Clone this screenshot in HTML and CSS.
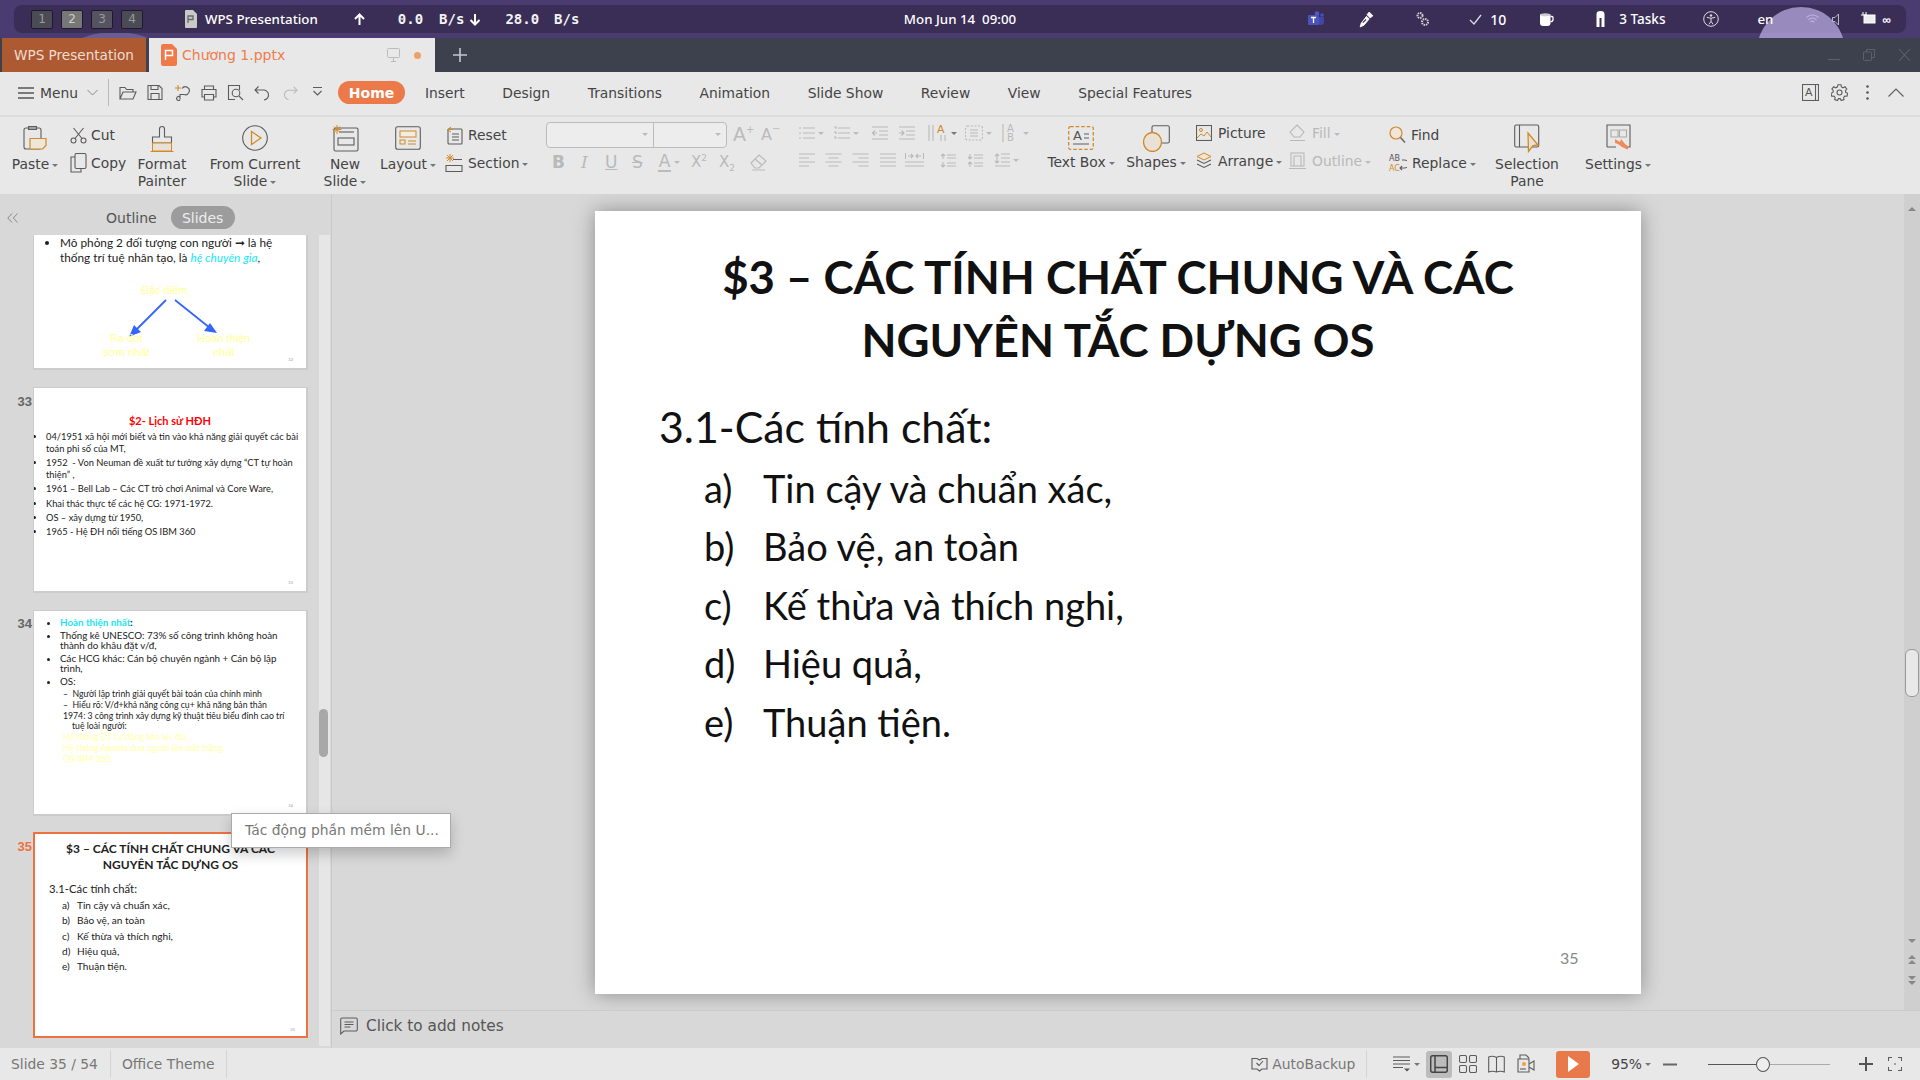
FILE: index.html
```html
<!DOCTYPE html>
<html lang="vi">
<head>
<meta charset="utf-8">
<title>WPS Presentation</title>
<link rel="stylesheet" href="styles.css">
</head>
<body>
<div class="desktop">
  <div class="blob-left"></div>
  <div class="topbar">
    <div class="tb-left">
      <div class="ws"><span class="wsn">1</span><span class="wsn on">2</span><span class="wsn mid">3</span><span class="wsn">4</span></div>
      <svg class="tb-app" width="12" height="18" viewBox="0 0 12 18"><path d="M1 0h7l4 4v13a1 1 0 0 1-1 1H1a1 1 0 0 1-1-1V1a1 1 0 0 1 1-1z" fill="#c9c9c9"/><path d="M3 13V6h5v3.500H3" fill="none" stroke="#666" stroke-width="1.300"/></svg>
      <span class="tb-title">WPS Presentation</span>
      <svg class="tb-up" width="11" height="13" viewBox="0 0 11 13"><path d="M5.500 12V1.500M1 6l4.500-4.500L10 6" fill="none" stroke="#fff" stroke-width="2"/></svg>
      <span class="mono m1">0.0</span><span class="mono m2">B/s</span>
      <svg class="tb-down" width="12" height="13" viewBox="0 0 11 13"><path d="M5.500 1v10.500M1 7l4.500 4.500L10 7" fill="none" stroke="#fff" stroke-width="2"/></svg>
      <span class="mono m3">28.0</span><span class="mono m4">B/s</span>
    </div>
    <div class="tb-clock">Mon Jun 14&nbsp; 09:00</div>
    <div class="tb-right">
      <svg class="r-teams" width="17" height="16" viewBox="0 0 17 16"><circle cx="9" cy="2.500" r="2.300" fill="#5059c9"/><circle cx="14" cy="4" r="1.800" fill="#4750b8"/><path d="M10 6h6v5a3 3 0 0 1-6 0z" fill="#3f48a8"/><rect x="0" y="4" width="11" height="10" rx="1" fill="#4b53bc"/><path d="M3 6.500h5M5.500 6.500V12" stroke="#fff" stroke-width="1.300"/></svg>
      <svg class="r-pip" width="15" height="17" viewBox="0 0 14 16"><path d="M9.500 1l3.500 3.500-2.500 2-3-3zM7 5l2.500 2.500-5 6L1 15l1-3.500z" fill="#fff" stroke="#fff" stroke-width=".8"/><path d="M3.500 11l3-3" stroke="#3a2e55"/></svg>
      <svg class="r-gears" width="13" height="16" viewBox="0 0 13 16"><circle cx="4" cy="4.500" r="2.500" fill="none" stroke="#cfcfcf" stroke-width="2" stroke-dasharray="1.500 .8"/><circle cx="9" cy="11" r="3" fill="none" stroke="#cfcfcf" stroke-width="2" stroke-dasharray="1.500 .8"/></svg>
      <svg class="r-check" width="13" height="11" viewBox="0 0 13 11"><path d="M1 6l4 4 7-9" fill="none" stroke="#ddd" stroke-width="1.300"/></svg>
      <span class="tb-text r-ten">10</span>
      <svg class="r-cup" width="15" height="15" viewBox="0 0 15 15"><path d="M1 2.500h10.500V11a3 3 0 0 1-3 3h-4.500a3 3 0 0 1-3-3z" fill="#fff"/><path d="M11.500 4.500h1.500a1 1 0 0 1 1 1v2a2 2 0 0 1-2.500 2" fill="none" stroke="#fff" stroke-width="1.300"/><ellipse cx="6.250" cy="2.800" rx="5" ry="1.500" fill="#ccc"/></svg>
      <svg class="r-helm" width="11" height="17" viewBox="0 0 11 17"><path d="M1.500 3a4 3 0 0 1 8 0v13h-3V7h-2v9h-3z" fill="#fff"/></svg>
      <span class="tb-text r-tasks">3 Tasks</span>
      <svg class="r-a11y" width="16" height="16" viewBox="0 0 16 16"><circle cx="8" cy="8" r="7.300" fill="none" stroke="#ddd"/><circle cx="8" cy="4.500" r="1.200" fill="#ddd"/><path d="M3.800 6.300l4.200 1 4.200-1M8 7.300v3l-2 3M8 10.300l2 3" fill="none" stroke="#ddd"/></svg>
      <span class="tb-text r-en">en</span>
      <svg class="r-wifi" width="13" height="11" viewBox="0 0 13 11"><path d="M.5 3.500a8.500 8.500 0 0 1 12 0M2.500 5.800a5.500 5.500 0 0 1 8 0M4.500 8a2.800 2.800 0 0 1 4 0" fill="none" stroke="#ddd" stroke-width="1.100"/></svg>
      <svg class="r-vol" width="7" height="13" viewBox="0 0 7 13"><path d="M.5 4.500H3L6.500 1v11L3 8.500H.5z" fill="none" stroke="#ddd"/></svg>
      <svg class="r-plug" width="15" height="14" viewBox="0 0 15 14"><rect x="3" y="3" width="11" height="8" fill="#eee" stroke="#fff"/><path d="M2 0v3M5 0v3M0 3h6" stroke="#fff"/></svg>
      <span class="tb-text r-inf">∞</span>
    </div>
  </div>
  <div class="blob-right"></div>
</div>

<div class="tabs">
  <div class="tab-app">WPS Presentation</div>
  <div class="tab-doc">
    <svg width="16" height="22" viewBox="0 0 16 22"><path d="M2 0h9l5 5v15a2 2 0 0 1-2 2H2a2 2 0 0 1-2-2V2a2 2 0 0 1 2-2z" fill="#f0794a"/><path d="M4.500 16V6.500h7v5h-7" fill="none" stroke="#fff" stroke-width="1.500"/></svg>
    <span class="doc-name">Chương 1.pptx</span>
    <svg class="doc-mon" width="13" height="14" viewBox="0 0 13 14"><rect x=".5" y=".5" width="12" height="9" rx="1" fill="none" stroke="#bbb"/><path d="M6.500 10v3M4 13.500h5" stroke="#bbb"/></svg>
    <span class="doc-dot"></span>
  </div>
  <svg class="tab-plus" width="14" height="14" viewBox="0 0 14 14"><path d="M7 0v14M0 7h14" stroke="#c4c6cc" stroke-width="1.600"/></svg>
  <div class="win">
    <svg width="12" height="12" viewBox="0 0 12 12"><path d="M0 10.500h12" stroke="#5c606b" stroke-width="1.200"/></svg>
    <svg width="12" height="12" viewBox="0 0 12 12"><rect x=".5" y="3" width="8" height="8.500" rx="1" fill="none" stroke="#5c606b"/><path d="M3.500 3V.5h8v8H9" fill="none" stroke="#5c606b"/></svg>
    <svg width="13" height="12" viewBox="0 0 13 12"><path d="M1 0l11 12M12 0L1 12" stroke="#5c606b" stroke-width="1.100"/></svg>
  </div>
</div>

<div class="menubar">
  <svg class="m-burger" width="16" height="12" viewBox="0 0 16 12"><path d="M0 1h16M0 6h16M0 11h16" stroke="#555" stroke-width="1.300"/></svg>
  <span class="m-menu">Menu</span>
  <svg class="m-chev" width="11" height="7" viewBox="0 0 11 7"><path d="M.5 1l5 5 5-5" fill="none" stroke="#888"/></svg>
  <span class="m-sep"></span>
  <div class="qa">
    <svg width="18" height="16" viewBox="0 0 18 16"><path d="M1 14V2.500h5l1.500 2H14v2.500M1 14l3-7h13l-3 7z" class="ic"/></svg>
    <svg width="16" height="17" viewBox="0 0 16 17"><path d="M1 1.500h11l3 3v11H1zM4 1.500v4h7v-4M4 15.500v-6h8v6" class="ic"/></svg>
    <svg width="18" height="17" viewBox="0 0 18 17"><path d="M9 4.500a4 4 0 1 1 2 6H7v5M7 16a2 2 0 1 1 0-3" class="ic"/><path d="M2 4h6M5 1v6" class="ic oc"/></svg>
    <svg width="16" height="16" viewBox="0 0 16 16"><path d="M3.500 4.500V1h9v3.500M3.500 12H1V4.500h14V12h-2.500M3.500 9.500h9V15h-9z" class="ic"/></svg>
    <svg width="17" height="17" viewBox="0 0 17 17"><path d="M8 15.500H1.500v-14h11V6" class="ic"/><circle cx="9" cy="9" r="3.800" class="ic"/><path d="M12 12l4 4" class="ic"/></svg>
    <svg width="15" height="16" viewBox="0 0 15 16"><path d="M4.500 1.500L1 5l3.500 3.500M1 5h8a5 5 0 0 1 1 10" class="ic"/></svg>
    <svg class="q-redo" width="14" height="16" viewBox="0 0 15 16"><path d="M10.500 1.500L14 5l-3.500 3.500M14 5H6a5 5 0 0 0-1 10" class="ic dis"/></svg>
    <svg class="q-dd" width="9" height="11" viewBox="0 0 9 11"><path d="M0 .5h9M.5 4l4 4 4-4" class="ic"/></svg>
  </div>
  <span class="m-home">Home</span>
  <nav class="m-tabs"><span>Insert</span><span>Design</span><span>Transitions</span><span>Animation</span><span>Slide Show</span><span>Review</span><span>View</span><span>Special Features</span></nav>
  <div class="m-right">
    <svg width="17" height="17" viewBox="0 0 17 17"><rect x=".5" y=".5" width="16" height="16" class="ic"/><path d="M13.500 .5v16" class="ic"/><text x="3" y="12" class="ic-t">A</text></svg>
    <svg width="17" height="17" viewBox="0 0 17 17"><circle cx="8.500" cy="8.500" r="2.500" class="ic"/><path d="M7 .8h3l.4 2.200 1.600.8 2-1 1.800 2.200-1.400 1.700.3 1.700 2 .9-.7 2.900-2.200-.1-1.200 1.300.4 2.200-2.800 1-1-2H7.500l-1 2-2.800-1 .4-2.200-1.200-1.300-2.200.1-.7-2.900 2-.9.300-1.700L.9 5l1.800-2.200 2 1 1.600-.8z" class="ic"/></svg>
    <svg class="m-dots" width="3" height="15" viewBox="0 0 3 15"><circle cx="1.500" cy="1.500" r="1.300" fill="#555"/><circle cx="1.500" cy="7.500" r="1.300" fill="#555"/><circle cx="1.500" cy="13.500" r="1.300" fill="#555"/></svg>
    <svg width="16" height="9" viewBox="0 0 16 9"><path d="M.5 8.500L8 1l7.500 7.500" class="ic"/></svg>
  </div>
</div>

<div class="ribbon">
  <div class="big g-paste">
    <div class="big-ic"><svg width="24" height="26" viewBox="0 0 24 26"><rect x="1" y="3" width="17" height="21" rx="2" class="ic"/><path d="M5.500 4.500V1.500h8v3z" class="ic"/><path d="M7 13.500h16v7l-3.500 3.500H7z" class="pap"/></svg></div>
    <div class="lbl">Paste<i class="car"></i></div>
  </div>
  <div class="col g-clip">
    <div class="row"><svg width="17" height="17" viewBox="0 0 17 17"><circle cx="3.500" cy="13.500" r="2.500" class="ic"/><circle cx="13.500" cy="13.500" r="2.500" class="ic"/><path d="M5 11.500L13.500 1M12 11.500L3.500 1" class="ic"/></svg><span>Cut</span></div>
    <div class="row"><svg width="17" height="20" viewBox="0 0 17 20"><rect x="5" y=".5" width="11" height="15" rx="1.500" class="ic"/><path d="M5 4H1v15h10v-3.500" class="ic"/></svg><span>Copy</span></div>
  </div>
  <div class="big g-painter">
    <div class="big-ic"><svg width="24" height="27" viewBox="0 0 24 27"><path d="M9.500 12V4a2.500 2.500 0 0 1 5 0v8h7v6h-19v-6z" class="ic"/><rect x="2.500" y="18" width="19" height="8" fill="#e9e1d6" stroke="#d08a2a"/><path d="M.5 26.500h23" stroke="#d08a2a"/></svg></div>
    <div class="lbl">Format<br>Painter</div>
  </div>
  <div class="big g-from">
    <div class="big-ic"><svg width="26" height="26" viewBox="0 0 26 26"><circle cx="13" cy="13" r="12.300" class="ic"/><path d="M9.500 6.500L19 13l-9.500 6.500z" fill="none" stroke="#d08a2a" stroke-width="1.300"/></svg></div>
    <div class="lbl">From Current<br>Slide<i class="car"></i></div>
  </div>
  <div class="big g-new">
    <div class="big-ic"><svg width="27" height="27" viewBox="0 0 27 27"><rect x="2" y="3" width="24" height="23" rx="1.500" class="ic"/><rect x="6" y="13" width="16" height="7" class="ic"/><path d="M7 7h15" class="ic"/><path d="M5 0v9M.5 4.500h9M2 1.500l6 6M8 1.500l-6 6" stroke="#d08a2a"/></svg></div>
    <div class="lbl">New<br>Slide<i class="car"></i></div>
  </div>
  <div class="big g-layout">
    <div class="big-ic"><svg width="26" height="24" viewBox="0 0 26 24"><rect x=".7" y=".7" width="24.600" height="22.600" rx="2" class="ic"/><rect x="5" y="5" width="16" height="6" fill="#f2ece2" stroke="#d08a2a"/><rect x="5" y="14" width="5" height="4" fill="none" stroke="#d08a2a"/><path d="M13 15h8M13 18h8" stroke="#d08a2a"/></svg></div>
    <div class="lbl">Layout<i class="car"></i></div>
  </div>
  <div class="col g-reset">
    <div class="row"><svg width="18" height="19" viewBox="0 0 18 19"><rect x="3" y="3" width="14" height="15" rx="1" class="ic"/><path d="M7 8h7M7 11h7M7 14h7" class="ic"/><path d="M6 1L2.500 3.500 6 6M3 3.500H8" fill="none" stroke="#d08a2a"/></svg><span>Reset</span></div>
    <div class="row"><svg width="18" height="19" viewBox="0 0 18 19"><path d="M5 0v8M1 4h8M2 1l6 6M8 1L2 7" stroke="#d08a2a"/><path d="M8 5.500h9M1 11.500h16v6H1z" class="ic"/></svg><span>Section<i class="car"></i></span></div>
  </div>
  <div class="col g-font">
    <div class="f-top">
      <div class="f-box"><span class="f-name"><i class="car dc"></i></span><span class="f-size"><i class="car dc"></i></span></div>
      <span class="f-a">A<sup>+</sup></span><span class="f-a sm">A<sup>−</sup></span>
    </div>
    <div class="f-bot">
      <b class="f-b">B</b><i class="f-i">I</i><u class="f-u">U</u><s class="f-s">S</s>
      <span class="f-col">A</span><i class="car dc"></i>
      <span class="f-x">X<sup>2</sup></span><span class="f-x two">X<sub>2</sub></span>
      <svg class="f-er" width="17" height="18" viewBox="0 0 17 18"><path d="M1 10l8-8 7 6-7 7H5zM5 6l7 6M2 17h13" class="ic dis"/></svg>
    </div>
  </div>
  <div class="col g-para">
    <div class="p-row">
      <span class="pi"><svg width="16" height="14" viewBox="0 0 16 14"><path d="M4 2h12M4 7h12M4 12h12M0 2h2M0 7h2M0 12h2" class="ic dis"/></svg><i class="car dc"></i></span>
      <span class="pi"><svg width="16" height="14" viewBox="0 0 16 14"><path d="M4 2h12M4 7h12M4 12h12M0 1h2v2M0 6h2v2M0 11h2v2" class="ic dis"/></svg><i class="car dc"></i></span>
      <span class="pi pm13"><svg width="16" height="14" viewBox="0 0 16 14"><path d="M0 1h16M7 5h9M7 9h9M0 13h16M5 7H0M3 4.500L.5 7 3 9.500" class="ic dis"/></svg></span>
      <span class="pi pm11"><svg width="16" height="14" viewBox="0 0 16 14"><path d="M0 1h16M7 5h9M7 9h9M0 13h16M0 7h5M2.500 4.500L5 7 2.500 9.500" class="ic dis"/></svg></span>
      <span class="pi pm13"><svg width="20" height="18" viewBox="0 0 20 18"><path d="M1 1v16M5 1v16M13 11v6M17 11v6" class="ic dis"/><text x="9" y="9" class="ic-o">A</text></svg><i class="car"></i></span>
      <span class="pi pm8"><svg width="18" height="18" viewBox="0 0 18 18"><rect x=".5" y="2" width="17" height="14" rx="2" class="ic dis" stroke-dasharray="2 1.500"/><path d="M5 6h8M5 9h8M5 12h8" class="ic dis"/></svg><i class="car dc"></i></span>
      <span class="pi pm10"><svg width="18" height="18" viewBox="0 0 18 18"><path d="M1 0v18" class="ic dis"/><text x="5" y="8" class="ic-d">A</text><text x="5" y="17" class="ic-d">B</text></svg><i class="car dc"></i></span>
    </div>
    <div class="p-row r2">
      <svg width="16" height="14" viewBox="0 0 16 14"><path d="M0 1h16M0 5h10M0 9h16M0 13h10" class="ic dis"/></svg>
      <svg class="pg10" width="17" height="14" viewBox="0 0 16 14"><path d="M0 1h16M3 5h10M0 9h16M3 13h10" class="ic dis"/></svg>
      <svg class="pg10" width="17" height="14" viewBox="0 0 16 14"><path d="M0 1h16M6 5h10M0 9h16M6 13h10" class="ic dis"/></svg>
      <svg class="pg11" width="16" height="14" viewBox="0 0 16 14"><path d="M0 1h16M0 5h16M0 9h16M0 13h16" class="ic dis"/></svg>
      <svg class="pg9" width="19" height="15" viewBox="0 0 19 15"><path d="M.5 0v6M18.500 0v6M3 3h5M6 1l2 2-2 2M16 3h-5M13 1l-2 2 2 2M0 9h19M0 13h19" class="ic dis"/></svg>
      <svg class="pg16" width="16" height="15" viewBox="0 0 16 15"><path d="M7 2h9M7 5h9M7 10h9M7 13h9M3 6V1M1 3l2-2 2 2M3 9v5M1 12l2 2 2-2" class="ic dis"/></svg>
      <svg class="pg11" width="16" height="15" viewBox="0 0 16 15"><path d="M7 2h9M7 5h9M7 10h9M7 13h9M3 1v5M1 4l2 2 2-2M3 14V9M1 11l2-2 2 2" class="ic dis"/></svg>
      <svg class="pg11" width="16" height="15" viewBox="0 0 16 15"><path d="M7 1h9M7 5h9M7 9h9M1 13h15M3 1v9M1 3l2-2 2 2M1 8l2 2 2-2" class="ic dis"/></svg><i class="car dc"></i>
    </div>
  </div>
  <div class="big g-tb alt">
    <div class="big-ic"><svg width="26" height="24" viewBox="0 0 26 24"><rect x=".7" y=".7" width="24.600" height="22.600" rx="1.500" fill="none" stroke="#d08a2a" stroke-width="1.300" stroke-dasharray="3.500 2"/><text x="5" y="14" class="ic-b">A</text><path d="M16 8h5M16 12h5M5 18h16" class="ic"/></svg></div>
    <div class="lbl">Text Box<i class="car"></i></div>
  </div>
  <div class="big g-sh alt">
    <div class="big-ic"><svg width="27" height="27" viewBox="0 0 27 27"><rect x="9" y=".7" width="17.300" height="17.300" rx="1.500" class="ic"/><ellipse cx="9.500" cy="17" rx="9" ry="9.500" fill="#e9e1d6" stroke="#d08a2a" stroke-width="1.300"/></svg></div>
    <div class="lbl">Shapes<i class="car"></i></div>
  </div>
  <div class="col g-pic hi">
    <div class="row"><svg width="16" height="16" viewBox="0 0 16 16"><rect x=".5" y=".5" width="15" height="15" class="ic"/><circle cx="5" cy="5" r="1.500" fill="none" stroke="#d08a2a"/><path d="M1 13l4-4 3 2 3-4 4 5" fill="none" stroke="#d08a2a"/></svg><span>Picture</span></div>
    <div class="row"><svg width="16" height="18" viewBox="0 0 16 18"><path d="M8 1l7 3.500L8 8 1 4.500z" fill="#efe6d8" stroke="#d08a2a"/><path d="M1 8l7 3.500L15 8M1 12l7 3.500 7-3.500" class="ic"/></svg><span>Arrange<i class="car"></i></span></div>
  </div>
  <div class="col g-fill hi off">
    <div class="row"><svg width="17" height="18" viewBox="0 0 17 18"><path d="M8 1l7 7-4 5H5L1 8zM1 16.500h15" class="ic dis"/></svg><span>Fill<i class="car dc"></i></span></div>
    <div class="row"><svg width="17" height="18" viewBox="0 0 17 18"><rect x="2" y="1" width="13" height="13" class="ic dis"/><path d="M5 14V4h7v10M0 16.500h17" class="ic dis"/></svg><span>Outline<i class="car dc"></i></span></div>
  </div>
  <div class="col g-find">
    <div class="row"><svg width="17" height="18" viewBox="0 0 17 18"><circle cx="7" cy="7" r="6" fill="#efe6d8" stroke="#d08a2a" stroke-width="1.200"/><path d="M11.500 11.500l4.500 5" stroke="#666" stroke-width="1.500"/></svg><span>Find</span></div>
    <div class="row"><svg width="18" height="20" viewBox="0 0 18 20"><text x="0" y="8" class="ic-s">AB</text><text x="0" y="18" class="ic-so">AC</text><path d="M13 7h2.500a2 2 0 0 1 0 8H11M13 13l-2 2 2 2" class="ic"/></svg><span>Replace<i class="car"></i></span></div>
  </div>
  <div class="big g-sel">
    <div class="big-ic"><svg width="26" height="29" viewBox="0 0 26 29"><rect x=".7" y="1" width="24" height="22" rx="1.500" class="ic"/><path d="M5.500 1v22" class="ic"/><path d="M14 9l10 12-5 .5-4.500 6z" fill="#e9e1d6" stroke="#d08a2a" stroke-width="1.300"/></svg></div>
    <div class="lbl">Selection<br>Pane</div>
  </div>
  <div class="big g-set">
    <div class="big-ic"><svg width="25" height="28" viewBox="0 0 25 28"><path d="M1 23V1h23v22h-5M1 23h9" class="ic"/><path d="M5 6h7v7H5zM13.500 6h7v7h-7zM5 6v7" class="ic dim"/><path d="M9 15l5 3 1-3 4 5 4 3-1.500 2.500L16 23l-4-3-3-1z" fill="#ee8a55"/></svg></div>
    <div class="lbl">Settings<i class="car"></i></div>
  </div>
</div>

<div class="main">
  <aside class="pane">
    <div class="pane-head">
      <svg class="collapse" width="11" height="10" viewBox="0 0 11 10"><path d="M5 .5L.8 5 5 9.500M10.500 .5L6.300 5l4.200 4.500" fill="none" stroke="#888"/></svg>
      <span class="ph-out">Outline</span>
      <span class="ph-sl">Slides</span>
    </div>
    <div class="pane-body">
      <div class="list">
        <div class="t-row first"><span class="num"></span>
          <div class="thumb t32">
            <ul class="tl"><li>Mô phỏng 2 đối tượng con người ➞ là hệ thống trí tuệ nhân tạo, là <em class="cy">hệ chuyên gia</em>,</li></ul>
            <span class="yl y1">Đặc điểm</span>
            <svg class="arrows" width="100" height="40" viewBox="0 0 100 40"><path d="M37 1L8 30M46 1l35 28" stroke="#3366ff" stroke-width="1.800"/><path d="M0 38l5-12 7 7zM88 34l-13-2 6-8z" fill="#3366ff"/></svg>
            <span class="yl y2">Ra đời<br>sớm nhất</span>
            <span class="yl y3">Hoàn thiện<br>nhất</span>
            <span class="pg">32</span>
          </div>
        </div>
        <div class="t-row"><span class="num">33</span>
          <div class="thumb t33">
            <div class="t-red">$2- Lịch sử HĐH</div>
            <ul class="ts">
              <li>04/1951 xã hội mới biết và tin vào khả năng giải quyết các bài toán phi số của MT,</li>
              <li>1952 &nbsp;- Von Neuman đề xuất tư tưởng xây dựng “CT tự hoàn thiện” ,</li>
              <li>1961 – Bell Lab – Các CT trò chơi Animal và Core Ware,</li>
              <li>Khai thác thực tế các hệ CG: 1971-1972.</li>
              <li>OS – xây dựng từ 1950,</li>
              <li>1965 - Hệ ĐH nổi tiếng OS IBM 360</li>
            </ul>
            <span class="pg">33</span>
          </div>
        </div>
        <div class="t-row"><span class="num n34">34</span>
          <div class="thumb t34">
            <ul class="t4">
              <li class="cyb"><span class="cy">Hoàn thiện nhất</span>:</li>
              <li>Thống kê UNESCO: 73% số công trình không hoàn thành do khâu đặt v/đ,</li>
              <li>Các HCG khác: Cán bộ chuyên ngành + Cán bộ lập trình,</li>
              <li>OS:</li>
            </ul>
            <div class="t4s">
              <p class="dash">–&nbsp; Người lập trình giải quyết bài toán của chính mình</p>
              <p class="dash">–&nbsp; Hiểu rõ: V/đ+khả năng công cụ+ khả năng bản thân</p>
              <p class="hang">1974: 3 công trình xây dựng kỹ thuật tiêu biểu đỉnh cao trí tuệ loài người:</p>
              <p class="ylw">Hệ thống ĐT tự động liên lục địa,</p>
              <p class="ylw">Hệ thống Appolo đưa người lên mặt trăng,</p>
              <p class="ylw">OS IBM 360.</p>
            </div>
            <span class="pg">34</span>
          </div>
        </div>
        <div class="t-row sel"><span class="num cur">35</span>
          <div class="thumb t35">
            <div class="t35-h">$3 – CÁC TÍNH CHẤT CHUNG VÀ CÁC<br>NGUYÊN TẮC DỰNG OS</div>
            <div class="t35-s">3.1-Các tính chất:</div>
            <ol class="t35-l"><li><b>a)</b>Tin cậy và chuẩn xác,</li><li><b>b)</b>Bảo vệ, an toàn</li><li><b>c)</b>Kế thừa và thích nghi,</li><li><b>d)</b>Hiệu quả,</li><li><b>e)</b>Thuận tiện.</li></ol>
            <span class="pg">35</span>
          </div>
        </div>
      </div>
      <div class="pane-scroll"><span class="ps-thumb"></span></div>
    </div>
    <div class="tooltip">Tác động phần mềm lên U...</div>
  </aside>
  <section class="work">
    <div class="work-top">
      <div class="stage">
        <article class="slide">
          <h1>$3 – CÁC TÍNH CHẤT CHUNG VÀ CÁC<br>NGUYÊN TẮC DỰNG OS</h1>
          <h2>3.1-Các tính chất:</h2>
          <ol class="s-list">
            <li><span>a)</span>Tin cậy và chuẩn xác,</li>
            <li><span>b)</span>Bảo vệ, an toàn</li>
            <li><span>c)</span>Kế thừa và thích nghi,</li>
            <li><span>d)</span>Hiệu quả,</li>
            <li><span>e)</span>Thuận tiện.</li>
          </ol>
          <div class="s-foot">35</div>
        </article>
      </div>
      <div class="vscroll">
        <svg class="vs-up" width="8" height="5" viewBox="0 0 8 5"><path d="M0 5l4-4 4 4z" fill="#888"/></svg>
        <span class="vs-thumb"></span>
        <svg class="vs-dn" width="8" height="5" viewBox="0 0 8 5"><path d="M0 0l4 4 4-4z" fill="#888"/></svg>
        <svg class="vs-dbl" width="8" height="9" viewBox="0 0 8 9"><path d="M0 4l4-4 4 4zM0 9l4-4 4 4z" fill="#888"/></svg>
        <svg class="vs-dbl2" width="8" height="9" viewBox="0 0 8 9"><path d="M0 0l4 4 4-4zM0 5l4 4 4-4z" fill="#888"/></svg>
      </div>
    </div>
    <div class="notes">
      <svg width="18" height="18" viewBox="0 0 18 18"><path d="M.7 17V2.500a1.500 1.500 0 0 1 1.500-1.500h13.600a1.500 1.500 0 0 1 1.500 1.500v10a1.500 1.500 0 0 1-1.500 1.500H4z" class="ic"/><path d="M4.500 5h9M4.500 7.500h9M4.500 10h6" class="ic"/></svg>
      <span>Click to add notes</span>
    </div>
  </section>
</div>

<footer class="status">
  <span class="st-cell">Slide 35 / 54</span>
  <span class="st-cell">Office Theme</span>
  <div class="st-right">
    <svg class="st-ab" width="17" height="17" viewBox="0 0 17 17"><path d="M1 2.500h5l2.500 1.500L11 2.500h5V13h-5l-2.500 2L6 13H1z" class="ic"/><path d="M5.500 7l2.500 2.500L12 5" class="ic"/></svg>
    <span class="st-abt">AutoBackup</span>
    <span class="st-sep"></span>
    <svg class="st-list" width="18" height="16" viewBox="0 0 18 16"><path d="M0 1h17M0 4.500h17M0 8h17M0 11.500h10" class="ic"/><path d="M11 12.500h6l-3 3z" fill="#555"/></svg><i class="car"></i>
    <span class="st-view"><svg width="18" height="18" viewBox="0 0 18 18"><rect x=".7" y=".7" width="16.600" height="16.600" rx="2" class="ic dark"/><path d="M5 1v16M5 12.500h12" class="ic dark"/></svg></span>
    <svg class="st-grid" width="18" height="18" viewBox="0 0 18 18"><rect x=".5" y=".5" width="7" height="7" rx="1.500" class="ic"/><rect x="10.500" y=".5" width="7" height="7" rx="1.500" class="ic"/><rect x=".5" y="10.500" width="7" height="7" rx="1.500" class="ic"/><rect x="10.500" y="10.500" width="7" height="7" rx="1.500" class="ic"/></svg>
    <svg class="st-book" width="17" height="18" viewBox="0 0 17 18"><path d="M8.500 2.500C6 1 3 1 .7 2v15c2.300-1 5.300-1 7.800 0 2.500-1 5.500-1 7.800 0V2c-2.300-1-5.300-1-7.800.5zM8.500 2.500V17" class="ic"/></svg>
    <svg class="st-cam" width="18" height="20" viewBox="0 0 18 20"><path d="M1 5h11v13H1zM3 5V1h6l3 3M12 10l5-3v9l-5-3" class="ic"/><circle cx="7" cy="10" r="2" fill="#e9a24a"/><path d="M3 15h6" class="ic"/></svg>
    <span class="st-play"><svg width="12" height="16" viewBox="0 0 12 16"><path d="M1 0l11 8-11 8z" fill="#fff"/></svg></span>
    <span class="st-zoom">95%</span><i class="car"></i>
    <svg class="st-minus" width="14" height="3" viewBox="0 0 14 3"><path d="M0 1.500h14" stroke="#666" stroke-width="2"/></svg>
    <div class="slider"><span class="knob"></span></div>
    <svg class="st-plus" width="14" height="14" viewBox="0 0 14 14"><path d="M7 0v14M0 7h14" stroke="#555" stroke-width="2"/></svg>
    <svg class="st-fit" width="14" height="14" viewBox="0 0 14 14"><path d="M.5 4V.5H4M10 .5h3.500V4M13.500 10v3.500H10M4 13.500H.5V10" class="ic"/><path d="M6 7h2" class="ic"/></svg>
  </div>
</footer>
</body>
</html>
```
FILE: styles.css
```css
*{box-sizing:border-box}
html,body{margin:0;padding:0;width:1920px;height:1080px;overflow:hidden}
body{font-family:"DejaVu Sans",sans-serif;font-size:13.850px;color:#444;background:#d8d8d8;display:flex;flex-direction:column}
svg{display:block;flex:none}
.ic{fill:none;stroke:#5c5c5c;stroke-width:1.100}
.ic.dis{stroke:#b9b9b9}
.ic.oc{stroke:#d08a2a}
.ic.dim{stroke:#aaa}
.ic.dark{stroke:#444;stroke-width:1.500}
.pap{fill:#efe6d8;stroke:#d08a2a;stroke-width:1.200}
.ic-t{font:11px "DejaVu Sans",sans-serif;fill:#555}
.ic-o{font:11px "DejaVu Sans",sans-serif;fill:#d08a2a}
.ic-d{font:10px "DejaVu Sans",sans-serif;fill:#b9b9b9}
.ic-b{font:13px "DejaVu Sans",sans-serif;fill:#555}
.ic-s{font:8px "DejaVu Sans",sans-serif;fill:#555}
.ic-so{font:8px "DejaVu Sans",sans-serif;fill:#d08a2a}

/* desktop strip */
.desktop{position:relative;height:38px;flex:none;background:#4a3b70;padding:5px 14px 5px 14px;overflow:hidden}
.blob-left{position:absolute;left:60px;top:32px;width:110px;height:60px;border-radius:50%;background:#6a5d93}
.blob-right{position:absolute;left:1757px;top:7px;width:88px;height:88px;border-radius:50%;background:rgba(190,175,230,.72)}
.topbar{position:relative;height:28px;border-radius:8px;background:#3a2e56;display:grid;grid-template-columns:1fr auto 1fr;align-items:center;color:#fff;font-family:"Noto Sans",sans-serif;font-size:13.300px;font-weight:500}
.tb-left,.tb-right{display:flex;align-items:center}
.tb-right{justify-content:flex-end}
.ws{display:flex;gap:8px;margin-left:17px}
.wsn{width:22px;height:19px;border:1px solid #1e1a2c;border-radius:2px;background:#4b4b55;color:#999;font-size:12px;font-weight:400;display:flex;align-items:center;justify-content:center;font-family:"DejaVu Sans",sans-serif}
.wsn.on{background:#777;color:#ccc}
.wsn.mid{background:#55535f}
.tb-app{margin-left:42px}
.tb-title{margin-left:8px}
.tb-up{margin-left:36px}
.mono{font:bold 14px "DejaVu Sans Mono",monospace;color:#f3f3f3}
.m1{margin-left:33px}.m2{margin-left:16px}
.tb-down{margin-left:5px}
.m3{margin-left:24px}.m4{margin-left:15px}
.tb-clock{font-size:13.300px}
.r-teams{margin-right:34px}
.r-pip{margin-right:42px}
.r-gears{margin-right:40px}
.r-check{margin-right:8px}
.r-ten{margin-right:33px;font-size:14px}
.r-cup{margin-right:41px}
.r-helm{margin-right:13px}
.r-tasks{margin-right:38px;font-size:13.500px}
.r-a11y{margin-right:38px}
.r-en{margin:0 33px 0 0;position:relative;z-index:2}
.r-wifi{margin-right:13px;opacity:.8}
.r-vol{margin-right:22px;opacity:.8}
.r-plug{margin-right:6px}
.r-inf{margin-right:15px;font-size:12px;font-weight:700}

/* tabs */
.tabs{height:34px;flex:none;background:#3d414d;display:flex;align-items:stretch;padding-left:2px}
.tab-app{width:144px;background:#ad5a33;color:#f2dccf;font-size:13.600px;display:flex;align-items:center;justify-content:center}
.tab-doc{margin-left:3px;width:286px;background:#e8e8e8;display:flex;align-items:center;padding-left:12px}
.doc-name{margin-left:5px;color:#ef7c4b;font-size:14px}
.doc-mon{margin-left:102px}
.doc-dot{margin-left:14px;width:7px;height:7px;border-radius:50%;background:#f0a060}
.tab-plus{margin:10px 0 0 18px}
.win{margin-left:auto;display:flex;gap:23px;align-items:center;padding-right:9px}

/* menu */
.menubar{height:43px;flex:none;background:#e8e8e8;display:flex;align-items:center;padding:0 0 2px 18px}
.m-menu{margin-left:6px}
.m-chev{margin-left:9px}
.m-sep{margin-left:10px;width:1px;height:27px;background:#bbb}
.qa{display:flex;align-items:center;gap:10px;margin-left:10px}
.q-redo{margin-left:5px}
.q-dd{margin-left:5px}
.m-home{margin-left:16px;width:67px;height:23px;border-radius:12px;background:#ec794a;color:#fff;font-weight:700;font-size:14px;display:flex;align-items:center;justify-content:center}
.m-tabs{display:flex;gap:37.600px;margin-left:20px}
.m-right{margin-left:auto;display:flex;align-items:center;gap:12px;padding-right:16px}
.m-dots{margin:0 7px 0 6px}

/* ribbon */
.ribbon{height:79px;flex:none;background:#e8e8e8;border-top:2px solid #dcdcdc;display:flex}
.big{display:flex;flex-direction:column;align-items:center;flex:none;padding-top:1px}
.big-ic{height:38px;display:flex;align-items:center;justify-content:center}
.big-ic svg{margin-top:2px}
.lbl{line-height:17px;text-align:center;white-space:nowrap}
.big.alt .lbl{margin-top:-2px}
.col{display:flex;flex-direction:column;flex:none}
.row{height:28px;display:flex;align-items:center;gap:5px;white-space:nowrap}
.car{display:inline-block;width:0;height:0;border:3px solid transparent;border-top:3.500px solid #777;border-bottom:0;margin-left:3px;vertical-align:middle}
.car.dc{border-top-color:#bbb}
.g-paste{width:56px;margin-left:7px}
.g-clip{width:60px;margin-left:7px;padding-top:4px}
.g-clip .row{gap:4px}
.g-painter{width:64px}
.g-from{width:102px;margin-left:10px}
.g-new{width:50px;margin-left:14px}
.g-layout{width:60px;margin-left:8px}
.g-reset{width:96px;margin-left:7px;padding-top:4px}
.g-font{width:245px;margin-left:5px}
.f-top{display:flex;align-items:center;height:32px;padding-top:3px}
.f-box{width:181px;height:26px;border:1px solid #bbb;border-radius:4px;background:#ededed;display:flex}
.f-name{width:107px;border-right:1px solid #bbb;display:flex;align-items:center;justify-content:flex-end;padding-right:5px}
.f-size{flex:1;display:flex;align-items:center;justify-content:flex-end;padding-right:5px}
.f-a{font-size:19px;color:#bbb;margin-left:6px;line-height:1;width:22px}
.f-a.sm{font-size:16px;margin-left:6px}
.f-a sup{font-size:10px;line-height:0;vertical-align:8px}
.f-bot{display:flex;align-items:center;height:24px;color:#b9b9b9;margin-top:1px;font-size:17px;padding-left:6px}
.f-b{width:29px}
.f-i{width:24px;font-style:italic;font-family:"DejaVu Serif",serif}
.f-u{width:27px}
.f-s{width:26px}
.f-col{border-bottom:2px solid #bbb;line-height:17px;width:13px;text-align:center}
.f-x{margin-left:11px;width:9px;font-size:15px;white-space:nowrap}
.f-x.two{margin-left:19px}
.f-x sup,.f-x sub{font-size:9px;line-height:0}
.f-er{margin-left:22px}
.g-para{width:250px;margin-left:8px}
.p-row{display:flex;align-items:center;height:28px;padding-top:4px}
.p-row.r2{height:28px;padding-top:2px}
.pi{display:flex;align-items:center;margin-right:10px}
.pi.pm13{margin-left:3px}
.pi.pm11{margin-left:1px}
.pi.pm8{margin-left:-2px}
.pg9{margin-left:9px}.pg10{margin-left:10px}.pg11{margin-left:11px}.pg16{margin-left:16px}
.g-tb{width:66px;margin-left:-1px}
.g-sh{width:58px;margin-left:13px}
.g-pic{width:90px;margin-left:11px}
.hi{padding-top:2px}
.hi .row{gap:6px}
.g-fill{width:94px;margin-left:3px}
.g-fill.off{color:#b9b9b9}
.g-find{width:102px;margin-left:6px;padding-top:4px}
.g-find .row{gap:5px}
.g-sel{width:62px;margin-left:5px}
.g-set{width:60px;margin-left:30px}

/* main */
.main{flex:1;min-height:0;display:flex;background:#d8d8d8}
.pane{position:relative;width:332px;flex:none;border-right:1px solid #cacaca;display:flex;flex-direction:column}
.pane-head{height:41px;flex:none;display:flex;align-items:center;padding:6px 0 0 7px;font-size:14px}
.ph-out{margin-left:88px;color:#555}
.ph-sl{margin-left:14px;width:64px;height:23px;border-radius:12px;background:#9c9c9c;color:#ececec;display:flex;align-items:center;justify-content:center}
.pane-body{flex:1;min-height:0;display:flex;overflow:hidden;padding-bottom:2px}
.list{width:319px;overflow:hidden;flex:none}
.pane-scroll{width:11px;background:#e6e6e6;position:relative;flex:none}
.ps-thumb{position:absolute;left:0;top:474px;width:9px;height:48px;border-radius:5px;background:#a8a8a8}
.t-row{display:flex;margin-bottom:17px}
.t-row.first{margin-top:-71px}
.t-row.sel{margin-top:-1px}
.num{width:33px;flex:none;text-align:right;padding:5px 1px 0 0;font:bold 13px/20px "Liberation Sans",sans-serif;color:#666}
.num.n34{padding-top:4px}
.num.cur{color:#ee7240}
.thumb{position:relative;width:275px;height:206px;background:#fff;border:1px solid #ccc;border-bottom-width:2px;border-right-width:2px;font-family:Lato,"Noto Sans",sans-serif;color:#222;overflow:hidden}
.pg{position:absolute;right:13px;bottom:6px;font-size:4px;color:#999}
.cy{color:#19e6f5}
.t32{padding-top:70px}
.tl{margin:0;padding:0 20px 0 26px;font-size:11.800px;line-height:15px}
.tl em{font-style:italic}
.yl{position:absolute;color:#ffff99;font:11px/14px "Liberation Sans",sans-serif;text-align:center;white-space:nowrap}
.y1{left:107px;top:118px}
.y2{left:69px;top:166px}
.y3{left:163px;top:166px}
.arrows{position:absolute;left:95px;top:134px}
.t-red{color:#f00;font-weight:700;font-size:11px;text-align:center;padding-top:25px;line-height:15px}
.ts{margin:3px 0 0;padding:0 6px 0 12px;font-size:9.300px;line-height:12px}
.ts li{margin-bottom:2.200px}
.t4{margin:0;padding:6px 12px 0 26px;font-size:9.800px;line-height:10px}
.t4 li{margin-bottom:3px}
.cyb{font-weight:700}
.t4s{padding-left:29px;font-size:8.700px;line-height:9.500px;padding-right:16px;margin-top:2.500px}
.t4s p{margin:0 0 1.600px}
.dash{padding-left:0}
.hang{padding-left:9px;text-indent:-9px}
.ylw{color:#ffffaa}
.t35-h{font-weight:700;font-size:12px;line-height:16px;text-align:center;padding-top:7px}
.t35-s{margin:8px 0 0 14px;font-size:11.300px;line-height:15px}
.t35-l{list-style:none;margin:2px 0 0 27px;padding:0;font-size:10.100px;line-height:15.300px}
.t35-l b{display:inline-block;width:15px;font-weight:400}
.thumb.t35{border:none;outline:2px solid #ee7240;outline-offset:-2px;padding:2px}
.tooltip{position:absolute;left:231px;top:619px;width:220px;height:35px;background:#fff;border:1px solid #aaa;color:#777;display:flex;align-items:center;padding:0 0 2px 13px;box-shadow:0 6px 14px rgba(0,0,0,.2);white-space:nowrap;z-index:3}

.work{flex:1;min-width:0;display:flex;flex-direction:column}
.work-top{flex:1;min-height:0;display:flex}
.stage{flex:1;min-width:0;display:flex;align-items:center;justify-content:center;overflow:hidden}
.slide{position:relative;width:1046px;height:783px;background:#fff;box-shadow:0 0 20px rgba(0,0,0,.35);font-family:Lato,"Noto Sans",sans-serif;color:#111;text-align:left}
.slide h1{margin:0;padding-top:34px;font-size:45.500px;line-height:63px;font-weight:700;text-align:center}
.slide h2{margin:26px 0 0 64px;font-size:42.800px;line-height:60px;font-weight:400}
.s-list{list-style:none;margin:2px 0 0 109px;padding:0;font-size:38px;line-height:58.500px}
.s-list span{display:inline-block;width:59px}
.s-foot{position:absolute;left:965px;top:737px;font-size:16px;color:#888;line-height:20px}
.vscroll{position:relative;width:16px;flex:none;background:#cfcfcf}
.vs-up{position:absolute;left:4px;top:12px}
.vs-thumb{position:absolute;left:1px;top:455px;width:14px;height:48px;border:1px solid #999;border-radius:6px;background:#e8e8e8}
.vs-dn{position:absolute;left:4px;top:745px}
.vs-dbl{position:absolute;left:4px;top:761px}
.vs-dbl2{position:absolute;left:4px;top:782px}
.notes{height:38px;flex:none;border-top:1px solid #cbcbcb;background:#d8d8d8;display:flex;align-items:center;padding:0 0 7px 8px;gap:8px;font-size:15.300px;color:#555;position:relative}

/* status */
.status{height:32px;flex:none;background:#e8e8e8;display:flex;align-items:center;color:#777}
.st-cell{height:28px;display:flex;align-items:center;padding:0 12px 0 11px;border-right:1px solid #d4d4d4}
.st-right{margin-left:auto;display:flex;align-items:center}
.st-ab{margin-right:4px}
.st-abt{color:#777}
.st-sep{margin:0 26px 0 11px;width:1px;height:28px;background:#d4d4d4}
.st-view{margin-left:6px;width:26px;height:27px;border-radius:3px;background:#bcbcbc;display:flex;align-items:center;justify-content:center}
.st-grid{margin-left:7px}
.st-book{margin-left:11px}
.st-cam{margin-left:12px}
.st-play{margin-left:21px;width:34px;height:27px;border-radius:3px;background:#e8794a;display:flex;align-items:center;justify-content:center}
.st-zoom{margin-left:21px;color:#444}
.st-minus{margin-left:12px}
.slider{position:relative;margin-left:31px;width:122px;height:1px;background:linear-gradient(90deg,#555 0,#555 45%,#aaa 45%,#aaa 100%)}
.knob{position:absolute;left:48px;top:-7px;width:14px;height:15px;border-radius:50%;background:#eee;border:1px solid #555}
.st-plus{margin-left:29px}
.st-fit{margin:0 18px 0 15px}
```
